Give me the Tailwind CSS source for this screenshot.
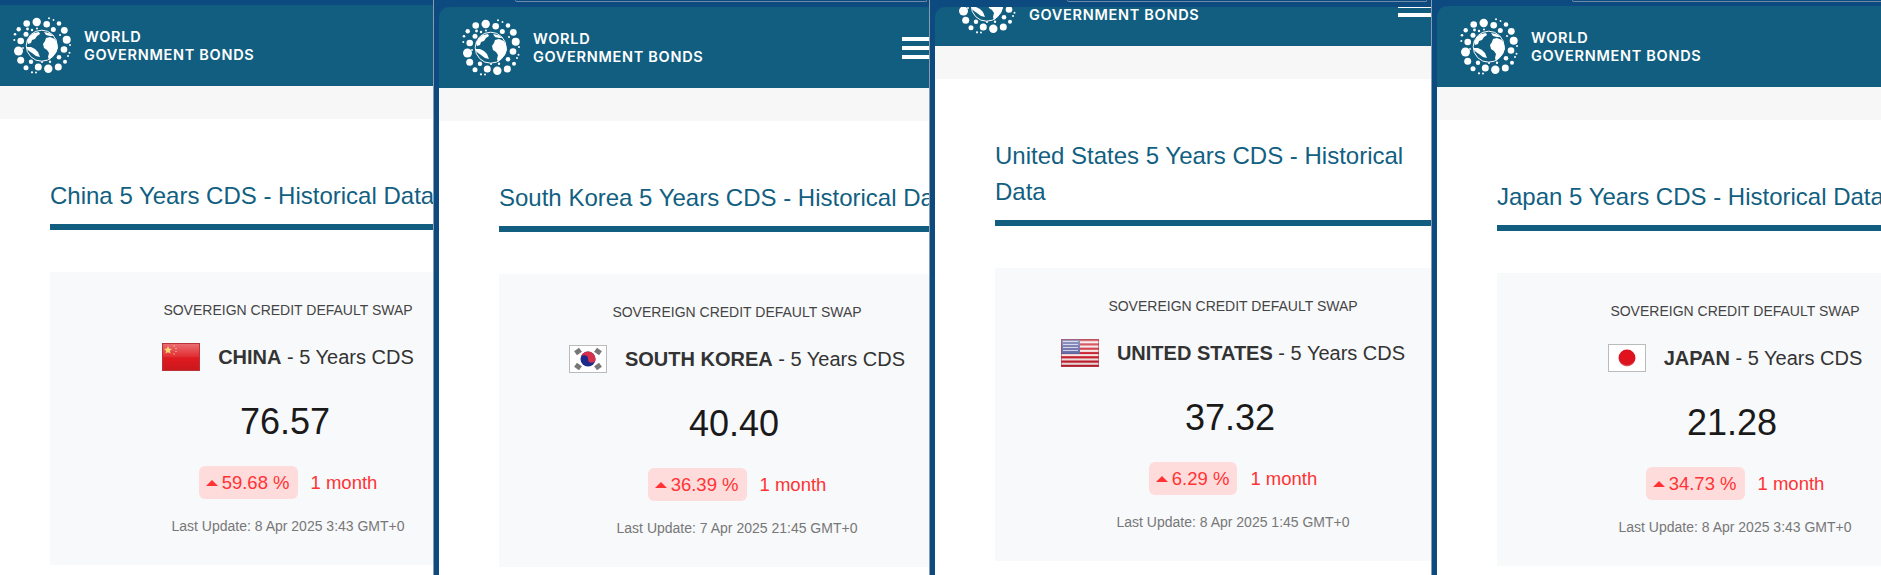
<!DOCTYPE html>
<html lang="en">
<head>
  <meta charset="UTF-8">
  <title>World Government Bonds - 5 Years CDS</title>
  <script src="https://cdn.jsdelivr.net/npm/@tailwindcss/browser@4"></script>
</head>
<body class="flex h-[575px] w-[1881px] overflow-hidden bg-[#0c4a7f] font-['Liberation_Sans',Arial,sans-serif]">

  <!-- shared logo and flag gloss -->
  <svg class="absolute h-0 w-0">
    <defs>
      <linearGradient id="gloss" x1="0" y1="0" x2="0" y2="1">
        <stop offset="0" stop-color="#fff" stop-opacity=".38"/>
        <stop offset=".5" stop-color="#fff" stop-opacity=".08"/>
        <stop offset=".55" stop-color="#000" stop-opacity="0"/>
        <stop offset="1" stop-color="#000" stop-opacity=".1"/>
      </linearGradient>
      <radialGradient id="sun" cx=".5" cy=".4" r=".6">
        <stop offset="0" stop-color="#e8101c"/>
        <stop offset=".8" stop-color="#d81420"/>
        <stop offset="1" stop-color="#e88088"/>
      </radialGradient>
      <symbol id="logo" viewBox="12 16 60 60">
        <g fill="#fff">
          <circle cx="36.7" cy="22" r="4.2"/><circle cx="26.7" cy="23.5" r="3.3"/><circle cx="46.7" cy="24.3" r="3.3"/>
          <circle cx="59" cy="23.5" r="2.3"/><circle cx="64.3" cy="30.3" r="3.4"/><circle cx="66.7" cy="39.7" r="4"/>
          <circle cx="64" cy="49.5" r="3.3"/><circle cx="69.5" cy="52.7" r="1"/><circle cx="59" cy="57.3" r="2.3"/>
          <circle cx="65" cy="61.7" r="2"/><circle cx="58.3" cy="67" r="3.5"/><circle cx="48.3" cy="68.7" r="4.2"/>
          <circle cx="38.3" cy="67" r="3.5"/><circle cx="31" cy="61.7" r="2.2"/><circle cx="26" cy="67.7" r="2.5"/>
          <circle cx="20.7" cy="60.3" r="3.5"/><circle cx="18.5" cy="51" r="4.5"/><circle cx="20.7" cy="41" r="3.3"/>
          <circle cx="26" cy="34.3" r="2.5"/><circle cx="18.7" cy="29.3" r="2.2"/><circle cx="15" cy="34.3" r="1.3"/>
          <circle cx="53.3" cy="29.5" r="2.5"/><circle cx="49" cy="18.3" r="1"/><circle cx="53.5" cy="20" r=".9"/>
          <circle cx="14.3" cy="40" r="1"/><circle cx="32" cy="72.3" r="1.1"/><circle cx="36" cy="72.5" r="1"/>
          <circle cx="50" cy="61.7" r="1.2"/><circle cx="70" cy="45" r="1"/><circle cx="32" cy="30" r="1.2"/>
          <circle cx="27.5" cy="29" r="1.4"/><circle cx="37" cy="28.5" r="1"/><circle cx="42" cy="62" r="1"/>
          <circle cx="68" cy="56" r="1"/><circle cx="23" cy="48" r=".9"/><circle cx="60" cy="35" r="1"/>
        </g>
        <circle cx="41.7" cy="45.7" r="15.5" fill="none" stroke="#fff" stroke-width="1"/>
        <g fill="#fff">
          <path d="M46 38l4-1 5 2 2 4 1 5-2 5-4 4-3 3-1-3 1-4-2-3-3-2-1-4 2-3z"/>
          <path d="M27 47l4 0 4 2 3 3 2 5-4-1-4-3-3-2-2-2z"/>
          <path d="M27 41l3-5 4-3 5-1 1 2-3 2-2 3-3 1-1 3-3 1z"/>
          <path d="M44 32l5 1 5 3-4 0-4-1z"/>
        </g>
      </symbol>
    </defs>
  </svg>

  <!-- China -->
  <section class="h-full w-[433px] flex-none overflow-hidden pt-[5px]">
    <div class="-ml-[10px] w-[596px]">
      <header class="flex h-[81px] w-full items-center justify-between bg-[#115e80] pr-[93px] pl-[22px]">
        <div class="flex items-center gap-[12px]">
          <svg class="h-[60px] w-[60px] flex-none"><use href="#logo"/></svg>
          <div class="font-['Inter',sans-serif] text-[14.5px] leading-[18px] font-semibold tracking-[0.7px] text-white">WORLD<br>GOVERNMENT BONDS</div>
        </div>
        <div class="flex w-[40px] flex-col gap-[5px]"><div class="h-[4px] bg-white"></div><div class="h-[4px] bg-white"></div><div class="h-[4px] bg-white"></div></div>
      </header>
      <div class="h-[33px] bg-[#f7f7f7]"></div>
      <main class="h-[600px] bg-white pt-[59px] pl-[60px]">
        <h1 class="w-[476px] border-b-[6px] border-[#115e80] pb-[10px] text-[24px] leading-[36px] font-normal text-[#125f82]">China 5 Years CDS - Historical Data</h1>
        <div class="mt-[42px] flex h-[293px] w-[476px] flex-col items-center bg-[#f8f9fb] pt-[28px]">
          <p class="text-[14px] leading-[20px] text-[#444]">SOVEREIGN CREDIT DEFAULT SWAP</p>
          <div class="mt-[23px] flex h-[28px] items-center gap-[18px]">
            <svg class="h-[28px] w-[38px] flex-none" viewBox="0 0 38 28">
              <rect width="38" height="28" fill="#de1a20"/>
              <path d="M6 3l1.2 2.6 2.8.3-2.1 1.9.6 2.8L6 9.2l-2.5 1.4.6-2.8L2 5.900l2.800-.3z" fill="#f5c84a"/>
              <circle cx="12" cy="3" r=".8" fill="#f0a060"/><circle cx="14" cy="5.500" r=".8" fill="#f0a060"/><circle cx="14" cy="8.500" r=".8" fill="#f0a060"/><circle cx="12" cy="11" r=".8" fill="#f0a060"/>
              <rect width="38" height="28" fill="url(#gloss)"/>
              <rect x=".5" y=".5" width="37" height="27" fill="none" stroke="#b8343a"/>
            </svg>
            <p class="text-[20px] leading-[28px] text-[#333]"><strong class="font-bold">CHINA</strong> - 5 Years CDS</p>
          </div>
          <p class="mt-[29px] pr-[6px] text-[36px] leading-[44px] text-[#1a1a1a]">76.57</p>
          <div class="mt-[22px] flex items-center gap-[13px] text-[18.5px] text-[#ff3333]">
            <span class="flex h-[33px] items-center gap-[4px] rounded-[6px] bg-[#ffdcdc] pr-[8px] pl-[7px]"><svg class="h-[6px] w-[12px]" viewBox="0 0 12 6"><path d="M6 0l6 6H0z" fill="#ff3333"/></svg>59.68 %</span>
            <span>1 month</span>
          </div>
          <p class="mt-[17px] text-[14px] leading-[20px] text-[#777]">Last Update: 8 Apr 2025 3:43 GMT+0</p>
        </div>
      </main>
    </div>
  </section>

  <!-- South Korea -->
  <section class="relative h-full w-[496px] flex-none border-l border-[#8a9bb0] pt-[7px] pl-[5px]">
    <div class="absolute top-0 left-[81px] h-[2px] w-[412px] rounded-b-[3px] border-x border-b border-[#6f8aa6]"></div>
    <div class="h-full overflow-hidden rounded-tl-[10px]">
      <div class="w-[596px]">
        <header class="flex h-[81px] w-full items-center justify-between bg-[#115e80] pr-[93px] pl-[22px]">
          <div class="flex items-center gap-[12px]">
            <svg class="h-[60px] w-[60px] flex-none"><use href="#logo"/></svg>
            <div class="font-['Inter',sans-serif] text-[14.5px] leading-[18px] font-semibold tracking-[0.7px] text-white">WORLD<br>GOVERNMENT BONDS</div>
          </div>
          <div class="flex w-[40px] flex-col gap-[5px]"><div class="h-[4px] bg-white"></div><div class="h-[4px] bg-white"></div><div class="h-[4px] bg-white"></div></div>
        </header>
        <div class="h-[33px] bg-[#f7f7f7]"></div>
        <main class="h-[600px] bg-white pt-[59px] pl-[60px]">
          <h1 class="w-[476px] border-b-[6px] border-[#115e80] pb-[10px] text-[24px] leading-[36px] font-normal text-[#125f82]">South Korea 5 Years CDS - Historical Data</h1>
          <div class="mt-[42px] flex h-[293px] w-[476px] flex-col items-center bg-[#f8f9fb] pt-[28px]">
            <p class="text-[14px] leading-[20px] text-[#444]">SOVEREIGN CREDIT DEFAULT SWAP</p>
            <div class="mt-[23px] flex h-[28px] items-center gap-[18px]">
              <svg class="h-[28px] w-[38px] flex-none" viewBox="0 0 38 28">
                <rect width="38" height="28" fill="#fff"/>
                <g fill="#777">
                  <rect x="6" y="4" width="6" height="5" transform="rotate(-35 9 6.500)"/><rect x="26" y="4" width="6" height="5" transform="rotate(35 29 6.500)"/>
                  <rect x="6" y="19" width="6" height="5" transform="rotate(35 9 21.500)"/><rect x="26" y="19" width="6" height="5" transform="rotate(-35 29 21.500)"/>
                </g>
                <circle cx="19" cy="14" r="7.500" fill="#1c2a8c"/>
                <path d="M11.500 14a7.500 7.500 0 0 1 15 0 3.750 3.750 0 0 1-7.500 0 3.750 3.750 0 0 0-7.500 0z" fill="#d8304a"/>
                <rect x=".5" y=".5" width="37" height="27" fill="none" stroke="#bbb"/>
              </svg>
              <p class="text-[20px] leading-[28px] text-[#333]"><strong class="font-bold">SOUTH KOREA</strong> - 5 Years CDS</p>
            </div>
            <p class="mt-[29px] pr-[6px] text-[36px] leading-[44px] text-[#1a1a1a]">40.40</p>
            <div class="mt-[22px] flex items-center gap-[13px] text-[18.5px] text-[#ff3333]">
              <span class="flex h-[33px] items-center gap-[4px] rounded-[6px] bg-[#ffdcdc] pr-[8px] pl-[7px]"><svg class="h-[6px] w-[12px]" viewBox="0 0 12 6"><path d="M6 0l6 6H0z" fill="#ff3333"/></svg>36.39 %</span>
              <span>1 month</span>
            </div>
            <p class="mt-[17px] text-[14px] leading-[20px] text-[#777]">Last Update: 7 Apr 2025 21:45 GMT+0</p>
          </div>
        </main>
      </div>
    </div>
  </section>

  <!-- United States, scrolled a little -->
  <section class="relative h-full w-[502px] flex-none border-l border-[#8a9bb0] pt-[7px] pl-[5px]">
    <div class="absolute top-0 left-[137px] h-[2px] w-[360px] rounded-b-[3px] border-x border-b border-[#6f8aa6]"></div>
    <div class="h-full overflow-hidden rounded-tl-[10px]">
      <div class="-mt-[42px] w-[596px]">
        <header class="flex h-[81px] w-full items-center justify-between bg-[#115e80] pr-[93px] pl-[22px]">
          <div class="flex items-center gap-[12px]">
            <svg class="h-[60px] w-[60px] flex-none"><use href="#logo"/></svg>
            <div class="font-['Inter',sans-serif] text-[14.5px] leading-[18px] font-semibold tracking-[0.7px] text-white">WORLD<br>GOVERNMENT BONDS</div>
          </div>
          <div class="flex w-[40px] flex-col gap-[5px]"><div class="h-[4px] bg-white"></div><div class="h-[4px] bg-white"></div><div class="h-[4px] bg-white"></div></div>
        </header>
        <div class="h-[33px] bg-[#f7f7f7]"></div>
        <main class="h-[600px] bg-white pt-[59px] pl-[60px]">
          <h1 class="w-[476px] border-b-[6px] border-[#115e80] pb-[10px] text-[24px] leading-[36px] font-normal text-[#125f82]">United States 5 Years CDS - Historical<br>Data</h1>
          <div class="mt-[42px] flex h-[293px] w-[476px] flex-col items-center bg-[#f8f9fb] pt-[28px]">
            <p class="text-[14px] leading-[20px] text-[#444]">SOVEREIGN CREDIT DEFAULT SWAP</p>
            <div class="mt-[23px] flex h-[28px] items-center gap-[18px]">
              <svg class="h-[28px] w-[38px] flex-none" viewBox="0 0 38 28">
                <rect width="38" height="28" fill="#f6e6e6"/>
                <g fill="#c8202e">
                  <rect y="0" width="38" height="2.200"/><rect y="4.300" width="38" height="2.200"/><rect y="8.600" width="38" height="2.200"/><rect y="12.900" width="38" height="2.200"/><rect y="17.200" width="38" height="2.200"/><rect y="21.500" width="38" height="2.200"/><rect y="25.800" width="38" height="2.200"/>
                </g>
                <rect width="19" height="15" fill="#5a5f9e"/>
                <g fill="#c8cbe4">
                  <rect x="2" y="2" width="15" height="1"/><rect x="2" y="5" width="15" height="1"/><rect x="2" y="8" width="15" height="1"/><rect x="2" y="11" width="15" height="1"/>
                </g>
                <rect width="38" height="28" fill="url(#gloss)"/>
                <rect x=".5" y=".5" width="37" height="27" fill="none" stroke="#a8404c" stroke-opacity=".6"/>
              </svg>
              <p class="text-[20px] leading-[28px] text-[#333]"><strong class="font-bold">UNITED STATES</strong> - 5 Years CDS</p>
            </div>
            <p class="mt-[29px] pr-[6px] text-[36px] leading-[44px] text-[#1a1a1a]">37.32</p>
            <div class="mt-[22px] flex items-center gap-[13px] text-[18.5px] text-[#ff3333]">
              <span class="flex h-[33px] items-center gap-[4px] rounded-[6px] bg-[#ffdcdc] pr-[8px] pl-[7px]"><svg class="h-[6px] w-[12px]" viewBox="0 0 12 6"><path d="M6 0l6 6H0z" fill="#ff3333"/></svg>6.29 %</span>
              <span>1 month</span>
            </div>
            <p class="mt-[17px] text-[14px] leading-[20px] text-[#777]">Last Update: 8 Apr 2025 1:45 GMT+0</p>
          </div>
        </main>
      </div>
    </div>
  </section>

  <!-- Japan -->
  <section class="relative h-full w-[450px] flex-none border-l border-[#8a9bb0] pt-[6px] pl-[5px]">
    <div class="absolute top-0 left-[140px] h-[2px] w-[320px] rounded-b-[3px] border-x border-b border-[#6f8aa6]"></div>
    <div class="h-full overflow-hidden rounded-tl-[10px]">
      <div class="w-[596px]">
        <header class="flex h-[81px] w-full items-center justify-between bg-[#115e80] pr-[93px] pl-[22px]">
          <div class="flex items-center gap-[12px]">
            <svg class="h-[60px] w-[60px] flex-none"><use href="#logo"/></svg>
            <div class="font-['Inter',sans-serif] text-[14.5px] leading-[18px] font-semibold tracking-[0.7px] text-white">WORLD<br>GOVERNMENT BONDS</div>
          </div>
          <div class="flex w-[40px] flex-col gap-[5px]"><div class="h-[4px] bg-white"></div><div class="h-[4px] bg-white"></div><div class="h-[4px] bg-white"></div></div>
        </header>
        <div class="h-[33px] bg-[#f7f7f7]"></div>
        <main class="h-[600px] bg-white pt-[59px] pl-[60px]">
          <h1 class="w-[476px] border-b-[6px] border-[#115e80] pb-[10px] text-[24px] leading-[36px] font-normal text-[#125f82]">Japan 5 Years CDS - Historical Data</h1>
          <div class="mt-[42px] flex h-[293px] w-[476px] flex-col items-center bg-[#f8f9fb] pt-[28px]">
            <p class="text-[14px] leading-[20px] text-[#444]">SOVEREIGN CREDIT DEFAULT SWAP</p>
            <div class="mt-[23px] flex h-[28px] items-center gap-[18px]">
              <svg class="h-[28px] w-[38px] flex-none" viewBox="0 0 38 28">
                <rect width="38" height="28" fill="#fff"/>
                <circle cx="19" cy="14" r="8.500" fill="url(#sun)"/>
                <rect x=".5" y=".5" width="37" height="27" fill="none" stroke="#bbb"/>
              </svg>
              <p class="text-[20px] leading-[28px] text-[#333]"><strong class="font-bold">JAPAN</strong> - 5 Years CDS</p>
            </div>
            <p class="mt-[29px] pr-[6px] text-[36px] leading-[44px] text-[#1a1a1a]">21.28</p>
            <div class="mt-[22px] flex items-center gap-[13px] text-[18.5px] text-[#ff3333]">
              <span class="flex h-[33px] items-center gap-[4px] rounded-[6px] bg-[#ffdcdc] pr-[8px] pl-[7px]"><svg class="h-[6px] w-[12px]" viewBox="0 0 12 6"><path d="M6 0l6 6H0z" fill="#ff3333"/></svg>34.73 %</span>
              <span>1 month</span>
            </div>
            <p class="mt-[17px] text-[14px] leading-[20px] text-[#777]">Last Update: 8 Apr 2025 3:43 GMT+0</p>
          </div>
        </main>
      </div>
    </div>
  </section>

</body>
</html>
